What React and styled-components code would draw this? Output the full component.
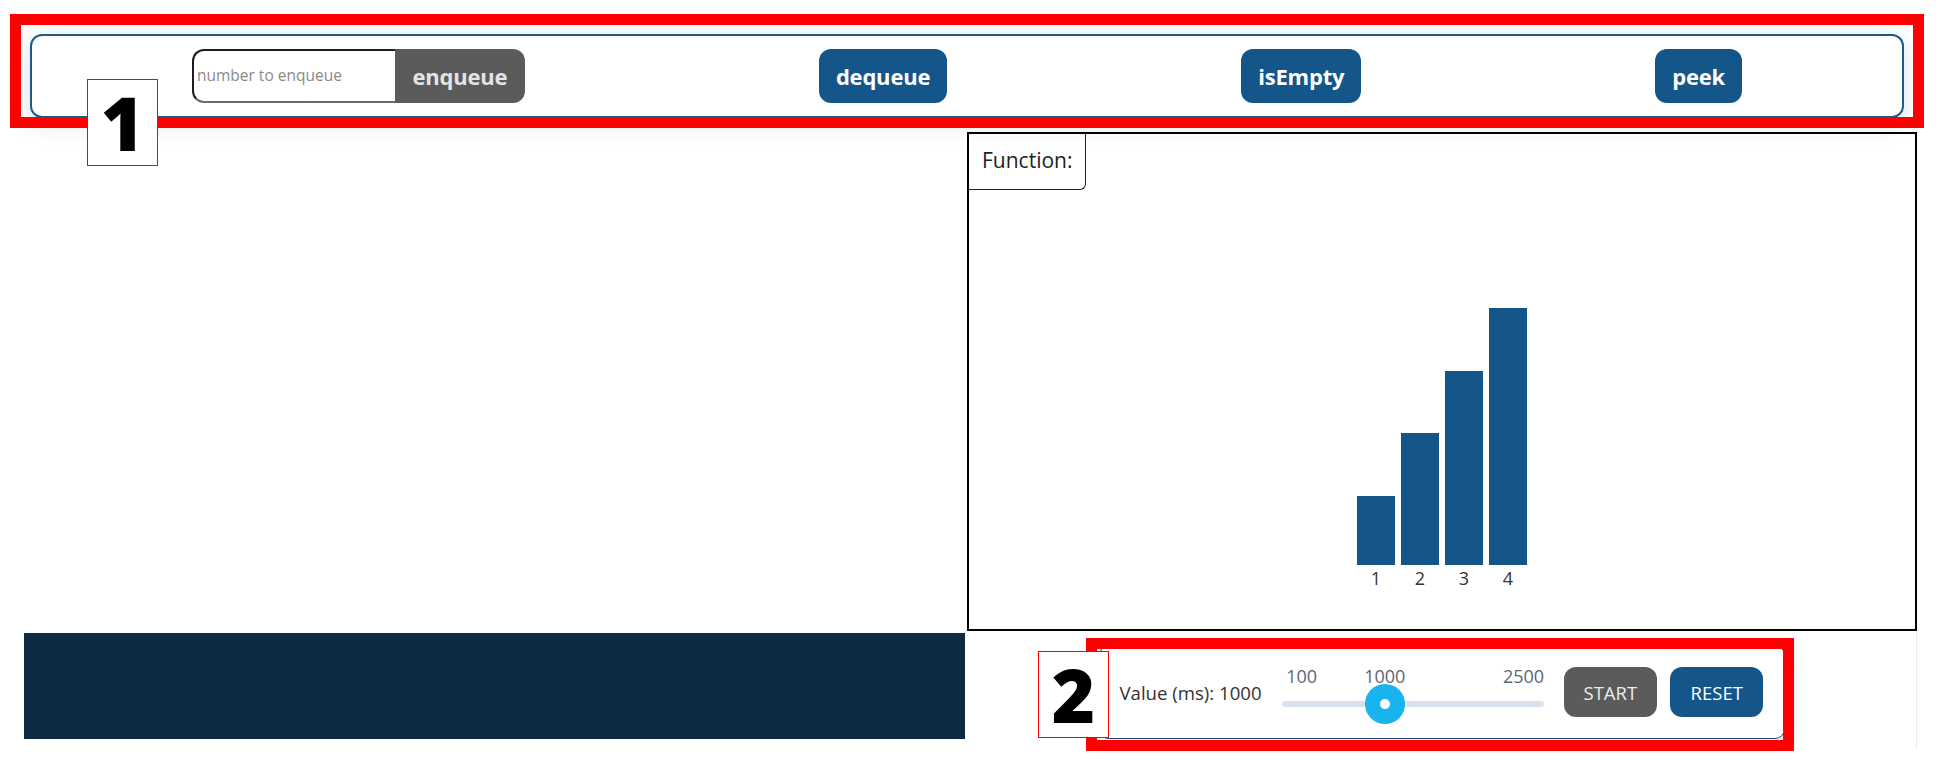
import styled, { createGlobalStyle } from 'styled-components';

const GlobalStyle = createGlobalStyle`
  body {
    margin: 0;
    background: #ffffff;
    font-family: 'Open Sans', 'Noto Sans', sans-serif;
  }
`;

const Page = styled.div`
  position: relative;
  width: 1947px;
  min-height: 773px;
  padding-top: 34px;
  box-sizing: border-box;
`;

const Toolbar = styled.section`
  margin: 0 43px 0 30px;
  height: 84px;
  box-sizing: border-box;
  border: 2px solid #1f5a85;
  border-radius: 12px;
  padding: 0 13px;
  display: flex;
  justify-content: space-around;
  align-items: center;
  background: #ffffff;
  box-shadow: 0 6px 22px rgba(40, 80, 130, 0.18);
`;

const EnqueueGroup = styled.div`
  display: flex;
  height: 54px;
`;

const NumberInput = styled.input`
  width: 203px;
  height: 54px;
  box-sizing: border-box;
  border: 2px solid;
  border-color: #1e1e1e #777777 #6a6a6a #1e1e1e;
  border-right: none;
  border-radius: 12px 0 0 12px;
  padding: 0 0 2px 3px;
  font-family: 'Open Sans', sans-serif;
  font-size: 15.5px;
  color: #333;
  outline: none;
  &::placeholder {
    color: #8a8a8a;
  }
`;

const ActionButton = styled.button`
  height: 54px;
  border: none;
  border-radius: ${(p) => (p.$joined ? '0 12px 12px 0' : '12px')};
  padding: 0 ${(p) => (p.$joined ? '0' : '17px')};
  width: ${(p) => (p.$joined ? '130px' : 'auto')};
  background: ${(p) => (p.$gray ? '#5b5b5b' : '#14558a')};
  color: ${(p) => (p.$gray ? '#e4e4e4' : '#ffffff')};
  font-family: 'Open Sans', sans-serif;
  font-weight: 700;
  font-size: 22px;
  letter-spacing: -0.2px;
  cursor: pointer;
`;

const Main = styled.main`
  margin-top: 14px;
  padding-left: 24px;
  display: grid;
  grid-template-columns: 941px 950px;
  grid-template-rows: 499px 119px;
  column-gap: 2px;
`;

const Spacer = styled.div``;

const FunctionPanel = styled.div`
  box-sizing: border-box;
  border: 2px solid #000;
  display: flex;
  flex-direction: column;
  align-items: flex-start;
`;

const FunctionTab = styled.div`
  box-sizing: border-box;
  height: 56px;
  padding: 0 13px 3px 13px;
  display: flex;
  align-items: center;
  border-right: 1px solid #222;
  border-bottom: 1px solid #222;
  border-bottom-right-radius: 6px;
  font-size: 21px;
  color: #222;
`;

const Chart = styled.div`
  flex: 1;
  align-self: stretch;
  display: flex;
  justify-content: center;
  align-items: flex-end;
  gap: 6px;
  padding-bottom: 40px;
`;

const BarColumn = styled.div`
  width: 38px;
  display: flex;
  flex-direction: column;
  align-items: center;
`;

const Bar = styled.div`
  width: 100%;
  background: #14558a;
`;

const BarLabel = styled.span`
  margin-top: 2px;
  height: 22px;
  line-height: 22px;
  font-size: 18px;
  color: #333;
`;

const NavyBlock = styled.div`
  margin-top: 2px;
  height: 106px;
  background: #0c2a44;
`;

const ControlsRow = styled.div`
  border-right: 1px solid #ececec;
  padding-top: 14px;
  display: flex;
  justify-content: center;
  align-items: flex-start;
`;

const ControlsBox = styled.div`
  width: 686px;
  height: 94px;
  box-sizing: border-box;
  border: 1px solid #1f4a6e;
  border-radius: 10px;
  padding: 0 20px;
  display: flex;
  align-items: center;
  background: #ffffff;
  box-shadow: 0 4px 18px rgba(40, 80, 130, 0.12);
`;

const ValueText = styled.span`
  font-size: 18.6px;
  color: #333;
  white-space: nowrap;
  margin-right: 20px;
`;

const SliderWrap = styled.div`
  position: relative;
  width: 262px;
  height: 76px;
  display: flex;
  align-items: flex-end;
`;

const Mark = styled.span`
  position: absolute;
  top: 10px;
  transform: translateX(-50%);
  font-size: 18px;
  color: #5c667a;
`;

const Range = styled.input`
  -webkit-appearance: none;
  appearance: none;
  width: 262px;
  height: 40px;
  margin: 0 0 6px 0;
  background: transparent;
  &::-webkit-slider-runnable-track {
    height: 6px;
    border-radius: 3px;
    background: #d9e0ee;
  }
  &::-webkit-slider-thumb {
    -webkit-appearance: none;
    width: 40px;
    height: 40px;
    margin-top: -17px;
    border-radius: 50%;
    border: none;
    background: radial-gradient(circle, #ffffff 0 4.5px, #17b4ee 5.5px);
  }
`;

const CtrlButton = styled.button`
  width: 94px;
  height: 50px;
  border: none;
  border-radius: 12px;
  margin-left: ${(p) => p.$ml}px;
  background: ${(p) => (p.$gray ? '#5b5b5b' : '#14558a')};
  color: ${(p) => (p.$gray ? '#ececec' : '#ffffff')};
  font-family: 'Open Sans', sans-serif;
  font-size: 18.5px;
  cursor: pointer;
`;

const RedFrame = styled.div`
  position: absolute;
  box-sizing: border-box;
  border: 11px solid #ff0000;
  pointer-events: none;
`;

const Tag = styled.div`
  position: absolute;
  box-sizing: border-box;
  width: 71px;
  height: 87px;
  border: 1px solid #ff0000;
  background: #ffffff;
  display: flex;
  align-items: center;
  justify-content: center;
  font-family: 'Open Sans', sans-serif;
  font-weight: 800;
  font-size: 74px;
  color: #000;
  line-height: 1;
`;

const bars = [1, 2, 3, 4];
const min = 100;
const max = 2500;
const speed = 1000;

const markLeft = (v) => 20 + ((v - min) / (max - min)) * (262 - 40);

export default function App() {
  return (
    <Page>
      <GlobalStyle />
      <Toolbar>
        <EnqueueGroup>
          <NumberInput placeholder="number to enqueue" />
          <ActionButton $gray $joined>
            enqueue
          </ActionButton>
        </EnqueueGroup>
        <ActionButton>dequeue</ActionButton>
        <ActionButton>isEmpty</ActionButton>
        <ActionButton>peek</ActionButton>
      </Toolbar>

      <Main>
        <Spacer />
        <FunctionPanel>
          <FunctionTab>Function:</FunctionTab>
          <Chart>
            {bars.map((v) => (
              <BarColumn key={v}>
                <Bar style={{ height: `${Math.round(v * 62.7 + 6.3)}px` }} />
                <BarLabel>{v}</BarLabel>
              </BarColumn>
            ))}
          </Chart>
        </FunctionPanel>
        <NavyBlock />
        <ControlsRow>
          <ControlsBox>
            <ValueText>Value (ms): {speed}</ValueText>
            <SliderWrap>
              <Mark style={{ left: markLeft(min) }}>{min}</Mark>
              <Mark style={{ left: markLeft(speed) }}>{speed}</Mark>
              <Mark style={{ left: markLeft(max) }}>{max}</Mark>
              <Range type="range" min={min} max={max} defaultValue={speed} readOnly />
            </SliderWrap>
            <CtrlButton $gray $ml={20}>
              START
            </CtrlButton>
            <CtrlButton $ml={13}>RESET</CtrlButton>
          </ControlsBox>
        </ControlsRow>
      </Main>

      <RedFrame style={{ left: 10, top: 14, width: 1914, height: 114 }} />
      <Tag style={{ left: 87, top: 79 }}>1</Tag>
      <RedFrame style={{ left: 1086, top: 638, width: 708, height: 113 }} />
      <Tag style={{ left: 1038, top: 651 }}>2</Tag>
    </Page>
  );
}
